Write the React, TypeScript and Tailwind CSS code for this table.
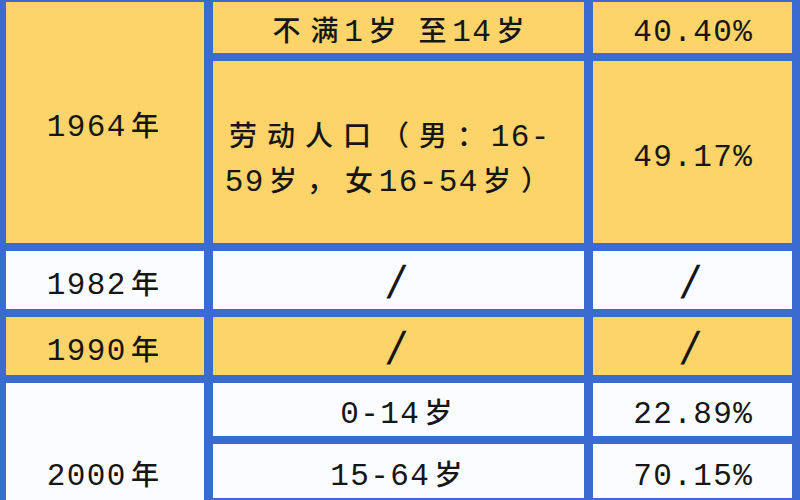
import React from "react";

function T({ s }: { s: string }) {
  return (
    <>
      {Array.from(s).map((c, i) =>
        /[\x00-\x7f]/.test(c) ? (
          <span key={i} className="inline-block w-[20px] text-center text-[31px]">
            {c}
          </span>
        ) : (
          <span key={i} className="inline-block w-[38px] text-center font-medium">
            {c}
          </span>
        )
      )}
    </>
  );
}

function Slash() {
  return (
    <span className="inline-block font-['Liberation_Sans',sans-serif] text-[46px] leading-none -skew-x-12 -translate-x-[2px] -translate-y-[3px]">
      /
    </span>
  );
}

function Cell({
  children,
  yellow,
  className = "",
}: {
  children: React.ReactNode;
  yellow?: boolean;
  className?: string;
}) {
  return (
    <div
      className={
        (yellow ? "bg-[#fdd46a] " : "bg-[#fbfcff] ") +
        "flex items-center justify-center whitespace-nowrap pt-[10px] " +
        className
      }
    >
      <div className="leading-none">{children}</div>
    </div>
  );
}

export default function App() {
  return (
    <div className="w-[800px] h-[500px] overflow-hidden bg-[#3a6bd0] font-['Liberation_Mono','Noto_Sans_CJK_SC',monospace] text-[28px] text-[#161616]">
      <div className="grid grid-cols-[198px_371px_199px] grid-rows-[51px_182px_58px_58px_53px_54px_54px] gap-x-[9px] gap-y-[8px] pl-[6px] pt-[2px]">
        <Cell yellow className="row-span-2">
          <T s="1964年" />
        </Cell>
        <Cell yellow>
          <T s="不满1岁" />
          <span className="inline-block w-[12px]"></span>
          <T s="至14岁" />
        </Cell>
        <Cell yellow>
          <T s="40.40%" />
        </Cell>
        <div className="bg-[#fdd46a] flex flex-col justify-center pl-[11px] pt-[18px] whitespace-nowrap leading-[44px]">
          <div>
            <T s="劳动人口（男：16-" />
          </div>
          <div>
            <T s="59岁，女16-54岁）" />
          </div>
        </div>
        <Cell yellow>
          <T s="49.17%" />
        </Cell>

        <Cell>
          <T s="1982年" />
        </Cell>
        <Cell>
          <Slash />
        </Cell>
        <Cell>
          <Slash />
        </Cell>

        <Cell yellow>
          <T s="1990年" />
        </Cell>
        <Cell yellow>
          <Slash />
        </Cell>
        <Cell yellow>
          <Slash />
        </Cell>

        <Cell className="row-span-3">
          <T s="2000年" />
        </Cell>
        <Cell>
          <T s="0-14岁" />
        </Cell>
        <Cell>
          <T s="22.89%" />
        </Cell>
        <Cell>
          <T s="15-64岁" />
        </Cell>
        <Cell>
          <T s="70.15%" />
        </Cell>
        <div className="bg-[#fbfcff]"></div>
        <div className="bg-[#fbfcff]"></div>
      </div>
    </div>
  );
}
